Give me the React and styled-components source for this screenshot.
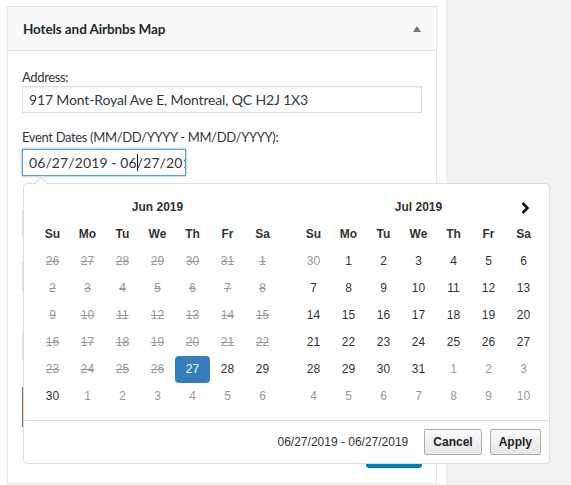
import React from "react";
import styled, { createGlobalStyle } from "styled-components";

const GlobalStyle = createGlobalStyle`
  html, body { margin: 0; padding: 0; }
  body {
    font-family: "Lato", "Open Sans", "Liberation Sans", sans-serif;
    background: #ffffff;
  }
`;

const DAY_NAMES = ["Su", "Mo", "Tu", "We", "Th", "Fr", "Sa"];

// each cell: [day, kind]  kind: "" normal, "off" other month, "dis" disabled (struck), "offdis", "sel"
const june = [
  [[26, "offdis"], [27, "offdis"], [28, "offdis"], [29, "offdis"], [30, "offdis"], [31, "offdis"], [1, "dis"]],
  [[2, "dis"], [3, "dis"], [4, "dis"], [5, "dis"], [6, "dis"], [7, "dis"], [8, "dis"]],
  [[9, "dis"], [10, "dis"], [11, "dis"], [12, "dis"], [13, "dis"], [14, "dis"], [15, "dis"]],
  [[16, "dis"], [17, "dis"], [18, "dis"], [19, "dis"], [20, "dis"], [21, "dis"], [22, "dis"]],
  [[23, "dis"], [24, "dis"], [25, "dis"], [26, "dis"], [27, "sel"], [28, ""], [29, ""]],
  [[30, ""], [1, "off"], [2, "off"], [3, "off"], [4, "off"], [5, "off"], [6, "off"]],
];

const july = [
  [[30, "off"], [1, ""], [2, ""], [3, ""], [4, ""], [5, ""], [6, ""]],
  [[7, ""], [8, ""], [9, ""], [10, ""], [11, ""], [12, ""], [13, ""]],
  [[14, ""], [15, ""], [16, ""], [17, ""], [18, ""], [19, ""], [20, ""]],
  [[21, ""], [22, ""], [23, ""], [24, ""], [25, ""], [26, ""], [27, ""]],
  [[28, ""], [29, ""], [30, ""], [31, ""], [1, "off"], [2, "off"], [3, "off"]],
  [[4, "off"], [5, "off"], [6, "off"], [7, "off"], [8, "off"], [9, "off"], [10, "off"]],
];

function Calendar({ title, weeks, showNext }) {
  return (
    <Grid>
      <span />
      <MonthTitle>{title}</MonthTitle>
      <NavCell>
        {showNext && (
          <svg width="10" height="14" viewBox="0 0 10 14">
            <path d="M2.5 2 L7.5 7 L2.5 12" fill="none" stroke="#111" strokeWidth="2.6" />
          </svg>
        )}
      </NavCell>
      {DAY_NAMES.map((d) => (
        <DayName key={d}>{d}</DayName>
      ))}
      {weeks.flat().map(([day, kind], i) => (
        <Day key={i} $kind={kind}>
          {day}
        </Day>
      ))}
    </Grid>
  );
}

export default function App() {
  return (
    <Page>
      <GlobalStyle />
      <Main>
        <Panel>
          <PanelHeader>
            <PanelTitle>Hotels and Airbnbs Map</PanelTitle>
            <Toggle />
          </PanelHeader>
          <PanelBody>
            <Label>Address:</Label>
            <TextInput defaultValue="917 Mont-Royal Ave E, Montreal, QC H2J 1X3" />
            <Label $mt={15}>Event Dates (MM/DD/YYYY - MM/DD/YYYY):</Label>
            <DateField>
              <DateInput>
                06/27/2019 - 06<Caret />/27/2019
              </DateInput>
              <Picker>
                <Calendars>
                  <Calendar title="Jun 2019" weeks={june} />
                  <Calendar title="Jul 2019" weeks={july} showNext />
                </Calendars>
                <Footer>
                  <Selected>06/27/2019 - 06/27/2019</Selected>
                  <Button>Cancel</Button>
                  <Button>Apply</Button>
                </Footer>
              </Picker>
            </DateField>
            <HiddenInput $mt={34} $h={27} />
            <HiddenInput $mt={25} $h={30} />
            <HiddenInput $mt={41} $h={27} />
            <MapBox />
            <Actions>
              <PrimaryButton>Save</PrimaryButton>
            </Actions>
          </PanelBody>
        </Panel>
      </Main>
      <Side />
    </Page>
  );
}

const Page = styled.div`
  display: flex;
  width: 571px;
  height: 485px;
  overflow: hidden;
`;

const Main = styled.div`
  width: 446px;
  padding: 6px 0 0 7px;
  box-sizing: border-box;
  background: #ffffff;
`;

const Side = styled.div`
  flex: 1;
  background: #f1f1f1;
  border-left: 1px solid #e8e8e8;
`;

const Panel = styled.div`
  width: 430px;
  border: 1px solid #e5e5e5;
  box-sizing: border-box;
  background: #fff;
`;

const PanelHeader = styled.div`
  height: 43px;
  display: flex;
  align-items: center;
  justify-content: space-between;
  padding: 0 15px 0 15px;
  background: #f9f9f9;
  border-bottom: 1px solid #e5e5e5;
`;

const PanelTitle = styled.h2`
  margin: 0;
  font-size: 13.5px;
  font-weight: 700;
  letter-spacing: -0.1px;
  color: #23282d;
`;

const Toggle = styled.span`
  width: 0;
  height: 0;
  border-left: 4px solid transparent;
  border-right: 4px solid transparent;
  border-bottom: 6px solid #72777c;
`;

const PanelBody = styled.div`
  padding: 17px 14px 15px 14px;
`;

const Label = styled.div`
  margin-top: ${(p) => p.$mt || 0}px;
  font-size: 13px;
  line-height: 18px;
  letter-spacing: -0.35px;
  color: #32373c;
`;

const TextInput = styled.input`
  display: block;
  width: 100%;
  height: 27px;
  box-sizing: border-box;
  border: 1px solid #dddddd;
  box-shadow: inset 0 1px 2px rgba(0, 0, 0, 0.07);
  padding: 0 6px;
  font-family: inherit;
  font-size: 14px;
  letter-spacing: -0.15px;
  color: #32373c;
  outline: none;
`;

const DateField = styled.div`
  position: relative;
  margin-top: 3px;
`;

const DateInput = styled.div`
  width: 164px;
  height: 27px;
  box-sizing: border-box;
  border: 1px solid #5b9dd9;
  box-shadow: 0 0 2px rgba(30, 140, 190, 0.8);
  padding: 0 6px;
  font-size: 14px;
  line-height: 25px;
  letter-spacing: 0.1px;
  color: #32373c;
  white-space: nowrap;
  overflow: hidden;
`;

const Caret = styled.span`
  display: inline-block;
  width: 1px;
  height: 17px;
  background: #111;
  vertical-align: -3px;
  margin: 0 -1px 0 0;
`;

const Picker = styled.div`
  position: absolute;
  top: 34px;
  left: 1px;
  z-index: 10;
  width: 527px;
  box-sizing: border-box;
  background: #fff;
  border: 1px solid #dddddd;
  border-radius: 4px;
  font-family: "Liberation Sans", Arial, sans-serif;
  color: #333;

  &::before,
  &::after {
    content: "";
    position: absolute;
    width: 0;
    height: 0;
    border-left: 7px solid transparent;
    border-right: 7px solid transparent;
    border-bottom: 7px solid #cccccc;
    top: -7px;
    left: 10px;
  }
  &::after {
    border-left-width: 6px;
    border-right-width: 6px;
    border-bottom: 6px solid #ffffff;
    top: -6px;
    left: 11px;
  }
`;

const Calendars = styled.div`
  display: flex;
  gap: 16px;
  padding: 10px 8px 10px 11px;
`;

const Grid = styled.div`
  display: grid;
  grid-template-columns: repeat(7, 35px);
  grid-auto-rows: 27px;
  font-size: 12px;
  text-align: center;
  line-height: 27px;
`;

const MonthTitle = styled.div`
  grid-column: span 5;
  font-weight: 700;
`;

const NavCell = styled.div`
  display: flex;
  align-items: center;
  justify-content: center;
  padding-left: 2px;
`;

const DayName = styled.div`
  font-weight: 700;
`;

const Day = styled.div`
  border-radius: 4px;
  color: ${(p) => (p.$kind === "" ? "#333" : p.$kind === "sel" ? "#fff" : "#999")};
  background: ${(p) => (p.$kind === "sel" ? "#357ebd" : "transparent")};
  text-decoration: ${(p) => (p.$kind === "dis" || p.$kind === "offdis" ? "line-through" : "none")};
`;

const Footer = styled.div`
  display: flex;
  align-items: center;
  justify-content: flex-end;
  gap: 8px;
  padding: 8px;
  border-top: 1px solid #dddddd;
`;

const Selected = styled.span`
  font-size: 12px;
  padding-right: 8px;
  color: #333;
`;

const Button = styled.button`
  height: 26px;
  padding: 0 8px;
  border: 1px solid #adadad;
  border-radius: 2px;
  background: linear-gradient(#fbfbfb, #e6e6e6);
  font-family: "Liberation Sans", Arial, sans-serif;
  font-size: 12px;
  font-weight: 700;
  color: #222;
`;

const HiddenInput = styled.div`
  margin-top: ${(p) => p.$mt}px;
  height: ${(p) => p.$h}px;
  border: 1px solid #dddddd;
  box-sizing: border-box;
`;

const MapBox = styled.div`
  margin-top: 27px;
  height: 40px;
  border-left: 2px solid #8b6b4a;
`;

const Actions = styled.div`
  display: flex;
  justify-content: flex-end;
  margin-top: 13px;
`;

const PrimaryButton = styled.button`
  width: 56px;
  height: 28px;
  border: 1px solid #0073aa;
  border-radius: 3px;
  background: #0085ba;
  color: #fff;
  font-family: inherit;
  font-size: 13px;
`;
